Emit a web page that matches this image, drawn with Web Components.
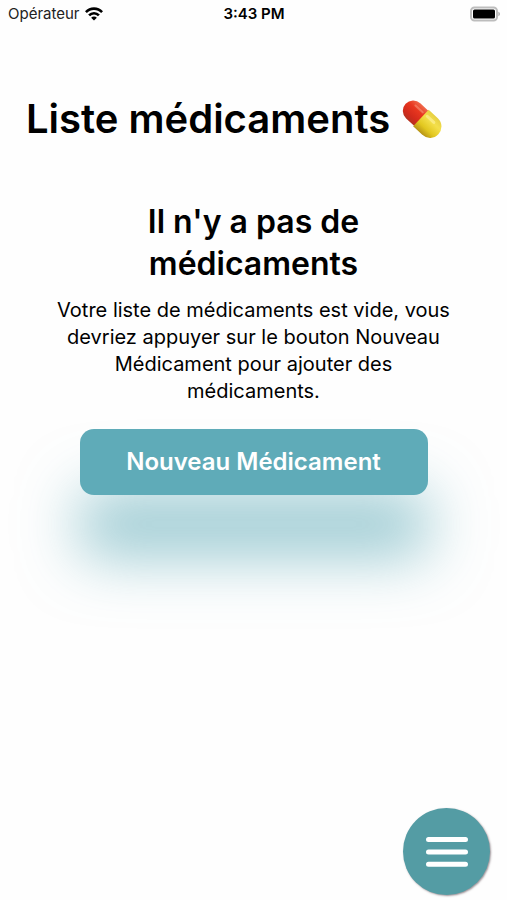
<!DOCTYPE html>
<html lang="fr">
<head>
<meta charset="utf-8">
<meta name="viewport" content="width=device-width, initial-scale=1">
<title>Liste médicaments</title>
<style>
    body{
        margin: 0;
        background: #fefefe;
        color: #000;
        font-family: Inter, "Liberation Sans", sans-serif;
    }
</style>
</head>
<body>
<medication-screen>
    <status-bar slot="status" carrier="Opérateur" time="3:43 PM"></status-bar>
    <page-title slot="title">Liste médicaments</page-title>
    <empty-state>
        <span slot="heading">Il n'y a pas de médicaments</span>
        Votre liste de médicaments est vide, vous devriez appuyer sur le bouton Nouveau Médicament pour ajouter des médicaments.
        <action-button slot="action">Nouveau Médicament</action-button>
    </empty-state>
    <menu-button slot="menu" label="Menu"></menu-button>
</medication-screen>
<script>
'use strict';

class MedicationScreen extends HTMLElement {

    constructor() {
        super();
        this.attachShadow({mode: 'open'}).innerHTML = `
            <style>
                :host{
                    display: flex;
                    flex-direction: column;
                    min-height: 100vh;
                }
                main{
                    flex: 1;
                    padding: 0 48px;
                }
                footer{
                    display: flex;
                    justify-content: flex-end;
                    padding: 0 17px 5px;
                }
            </style>
            <slot name="status"></slot>
            <slot name="title"></slot>
            <main><slot></slot></main>
            <footer><slot name="menu"></slot></footer>
        `;
    }
}

class StatusBar extends HTMLElement {

    constructor() {
        super();
        this.attachShadow({mode: 'open'}).innerHTML = `
            <style>
                :host{
                    display: grid;
                    grid-template-columns: 1fr auto 1fr;
                    align-items: center;
                    height: 28px;
                    padding: 0 7px 0 8px;
                    font-size: 15px;
                    line-height: 28px;
                }
                .carrier{
                    display: flex;
                    align-items: center;
                    gap: 5px;
                    color: #222;
                }
                .time{
                    font-weight: 600;
                }
                .battery{
                    justify-self: end;
                }
                svg{
                    display: block;
                }
            </style>
            <div class="carrier">
                <span class="name"></span>
                <svg width="18" height="14" viewBox="0 0 18 14" fill="none" stroke="#000" stroke-width="2.6" aria-hidden="true">
                    <path d="M.9 5.2C5.4.4 12.6.4 17.1 5.2"/>
                    <path d="M4.1 8.4c2.7-2.9 7.1-2.9 9.8 0"/>
                    <path d="M9 13.6 6.1 10.7c1.6-1.7 4.2-1.7 5.8 0z" fill="#000" stroke="none"/>
                </svg>
            </div>
            <div class="time"></div>
            <svg class="battery" width="30" height="16" viewBox="0 0 30 16" aria-hidden="true">
                <rect x="1" y="1.5" width="26" height="13" rx="3.5" fill="#fff" stroke="#bdbdbd" stroke-width="2"/>
                <rect x="3" y="3.5" width="22" height="9" rx="1.5"/>
                <path d="M28.4 5.8c2 .7 2 3.7 0 4.4z" fill="#aaa"/>
            </svg>
        `;
    }

    connectedCallback() {
        this.shadowRoot.querySelector('.name').textContent = this.getAttribute('carrier');
        this.shadowRoot.querySelector('.time').textContent = this.getAttribute('time');
    }
}

class PageTitle extends HTMLElement {

    constructor() {
        super();
        this.attachShadow({mode: 'open'}).innerHTML = `
            <style>
                :host{
                    display: block;
                    padding: 66px 26px 0;
                }
                h1{
                    display: flex;
                    align-items: center;
                    gap: 12px;
                    margin: 0;
                    font-size: 40px;
                    font-weight: 600;
                    line-height: 50px;
                    white-space: nowrap;
                }
                svg{
                    flex: none;
                }
            </style>
            <h1>
                <slot></slot>
                <svg width="40" height="40" viewBox="0 0 40 40" role="img" aria-label="Pilule">
                    <defs>
                        <linearGradient id="red" x1="0" y1="0" x2="0" y2="1">
                            <stop offset="0" stop-color="#ef6a4c"/>
                            <stop offset=".35" stop-color="#e8371f"/>
                            <stop offset=".75" stop-color="#d32a1b"/>
                            <stop offset="1" stop-color="#b5301f"/>
                        </linearGradient>
                        <linearGradient id="yellow" x1="0" y1="0" x2="0" y2="1">
                            <stop offset="0" stop-color="#e6cf42"/>
                            <stop offset=".3" stop-color="#f4e04c"/>
                            <stop offset=".7" stop-color="#e2c71f"/>
                            <stop offset="1" stop-color="#b69316"/>
                        </linearGradient>
                        <filter id="soft" x="-20%" y="-60%" width="140%" height="220%" filterUnits="userSpaceOnUse">
                            <feGaussianBlur stdDeviation=".9"/>
                        </filter>
                    </defs>
                    <g transform="rotate(43 20 20)">
                        <path d="M20 9.6H8a10.4 10.4 0 0 0 0 20.8h12z" fill="url(#red)"/>
                        <path d="M18.5 8.6H31a11.4 11.4 0 0 1 0 22.8H18.5z" fill="url(#yellow)"/>
                        <path d="M6 14.6h10" stroke="#f9a184" stroke-width="2" stroke-linecap="round" opacity=".5"/>
                        <path d="M22 14.4h9" stroke="#fff3a0" stroke-width="3" stroke-linecap="round" opacity=".6"/>
                    </g>
                </svg>
            </h1>
        `;
    }
}

class EmptyState extends HTMLElement {

    constructor() {
        super();
        this.attachShadow({mode: 'open'}).innerHTML = `
            <style>
                :host{
                    display: flex;
                    flex-direction: column;
                    align-items: center;
                    padding-top: 57px;
                    text-align: center;
                }
                h2{
                    max-width: 280px;
                    margin: 0;
                    font-size: 32px;
                    font-weight: 600;
                    line-height: 42px;
                }
                p{
                    max-width: 400px;
                    margin: 12px 0 24px;
                    font-size: 20px;
                    line-height: 27px;
                }
            </style>
            <h2><slot name="heading"></slot></h2>
            <p><slot></slot></p>
            <slot name="action"></slot>
        `;
    }
}

class ActionButton extends HTMLElement {

    constructor() {
        super();
        this.attachShadow({mode: 'open'}).innerHTML = `
            <style>
                :host{
                    display: block;
                }
                button{
                    display: block;
                    min-width: 348px;
                    padding: 18px 32px;
                    border: 0;
                    border-radius: 14px;
                    background: #5fabb8;
                    box-shadow: 0 62px 60px rgba(95,171,184,.62);
                    color: #fff;
                    font-family: inherit;
                    font-size: 24px;
                    font-weight: 600;
                    line-height: 30px;
                    cursor: pointer;
                }
            </style>
            <button type="button"><slot></slot></button>
        `;
    }
}

class MenuButton extends HTMLElement {

    constructor() {
        super();
        this.attachShadow({mode: 'open'}).innerHTML = `
            <style>
                :host{
                    display: block;
                }
                button{
                    display: flex;
                    align-items: center;
                    justify-content: center;
                    width: 87px;
                    height: 87px;
                    padding: 0;
                    border: 0;
                    border-radius: 50%;
                    background: #549ca4;
                    box-shadow: 1px 1px 2px rgba(60,40,50,.5);
                    cursor: pointer;
                }
            </style>
            <button type="button">
                <svg width="44" height="32" viewBox="0 0 44 32" stroke="#fff" stroke-width="5" stroke-linecap="round" aria-hidden="true">
                    <path d="M3.5 3.5h37M3.5 16h37M3.5 28.3h37"/>
                </svg>
            </button>
        `;
    }

    connectedCallback() {
        this.shadowRoot.querySelector('button').setAttribute('aria-label', this.getAttribute('label'));
    }
}

customElements.define('medication-screen', MedicationScreen);
customElements.define('status-bar', StatusBar);
customElements.define('page-title', PageTitle);
customElements.define('empty-state', EmptyState);
customElements.define('action-button', ActionButton);
customElements.define('menu-button', MenuButton);
</script>
</body>
</html>
